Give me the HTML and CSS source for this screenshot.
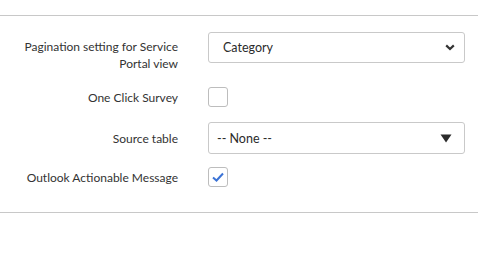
FILE: index.html
```html
<!DOCTYPE html>
<html lang="en">
<head>
  <meta charset="UTF-8" />
  <title>Survey settings</title>
  <link rel="stylesheet" href="styles.css">
</head>
<body>

  <div class="section">
    <!-- Pagination -->
    <div class="row row-top">
      <label class="field-label">Pagination setting for Service Portal view</label>
      <div class="select">
        <span>Category</span>
        <svg class="chevron" width="10" height="7" viewBox="0 0 10 7">
          <path d="M1.2 1.4 L5 5 L8.8 1.4" fill="none" stroke="#333" stroke-width="2.2"/>
        </svg>
      </div>
    </div>

    <!-- One click survey -->
    <div class="row">
      <label class="field-label">One Click Survey</label>
      <span class="checkbox"></span>
    </div>

    <!-- Source table -->
    <div class="row">
      <label class="field-label">Source table</label>
      <div class="select select-none">
        <span>-- None --</span>
        <svg class="caret" width="12" height="9" viewBox="0 0 12 9">
          <path d="M0.5 0.5 H11.5 L6 8.5 Z" fill="#2b2b2b"/>
        </svg>
      </div>
    </div>

    <!-- Outlook -->
    <div class="row">
      <label class="field-label">Outlook Actionable Message</label>
      <span class="checkbox checked">
        <svg width="14" height="12" viewBox="0 0 14 12">
          <path d="M2 6.5 L5.5 9.5 L12 2.5" fill="none" stroke="#3b73d6" stroke-width="2"/>
        </svg>
      </span>
    </div>
  </div>

</body>
</html>
```

FILE: styles.css
```css
* {
  box-sizing: border-box;
  margin: 0;
  padding: 0;
}

body {
  background: #fff;
  color: #333;
  font-family: 'Lato', sans-serif;
  font-size: 12px;
  padding-top: 15px;
}

.section {
  border-top: 1px solid #c8c8c8;
  border-bottom: 1px solid #c8c8c8;
  padding: 16px 0 25px;
}

.row {
  display: flex;
  align-items: center;
  margin-bottom: 15px;
}

.row:nth-child(3) {
  margin-bottom: 13px;
}

.row:last-child {
  margin-bottom: 0;
}

.row-top {
  align-items: flex-start;
}

.field-label {
  width: 178px;
  margin-right: 30px;
  text-align: right;
  line-height: 17px;
}

.row-top .field-label {
  padding-top: 6px;
}

.select {
  width: 257px;
  height: 31px;
  border: 1px solid #c9c9c9;
  border-radius: 3px;
  display: flex;
  align-items: center;
  justify-content: space-between;
  padding: 0 9px 0 14px;
  color: #2b2b2b;
  font-size: 12.5px;
}

.select-none {
  height: 32px;
  padding-left: 8px;
  padding-right: 12px;
}

.checkbox {
  width: 20px;
  height: 20px;
  border: 1px solid #bdbdbd;
  border-radius: 3px;
  display: flex;
  align-items: center;
  justify-content: center;
}
```
